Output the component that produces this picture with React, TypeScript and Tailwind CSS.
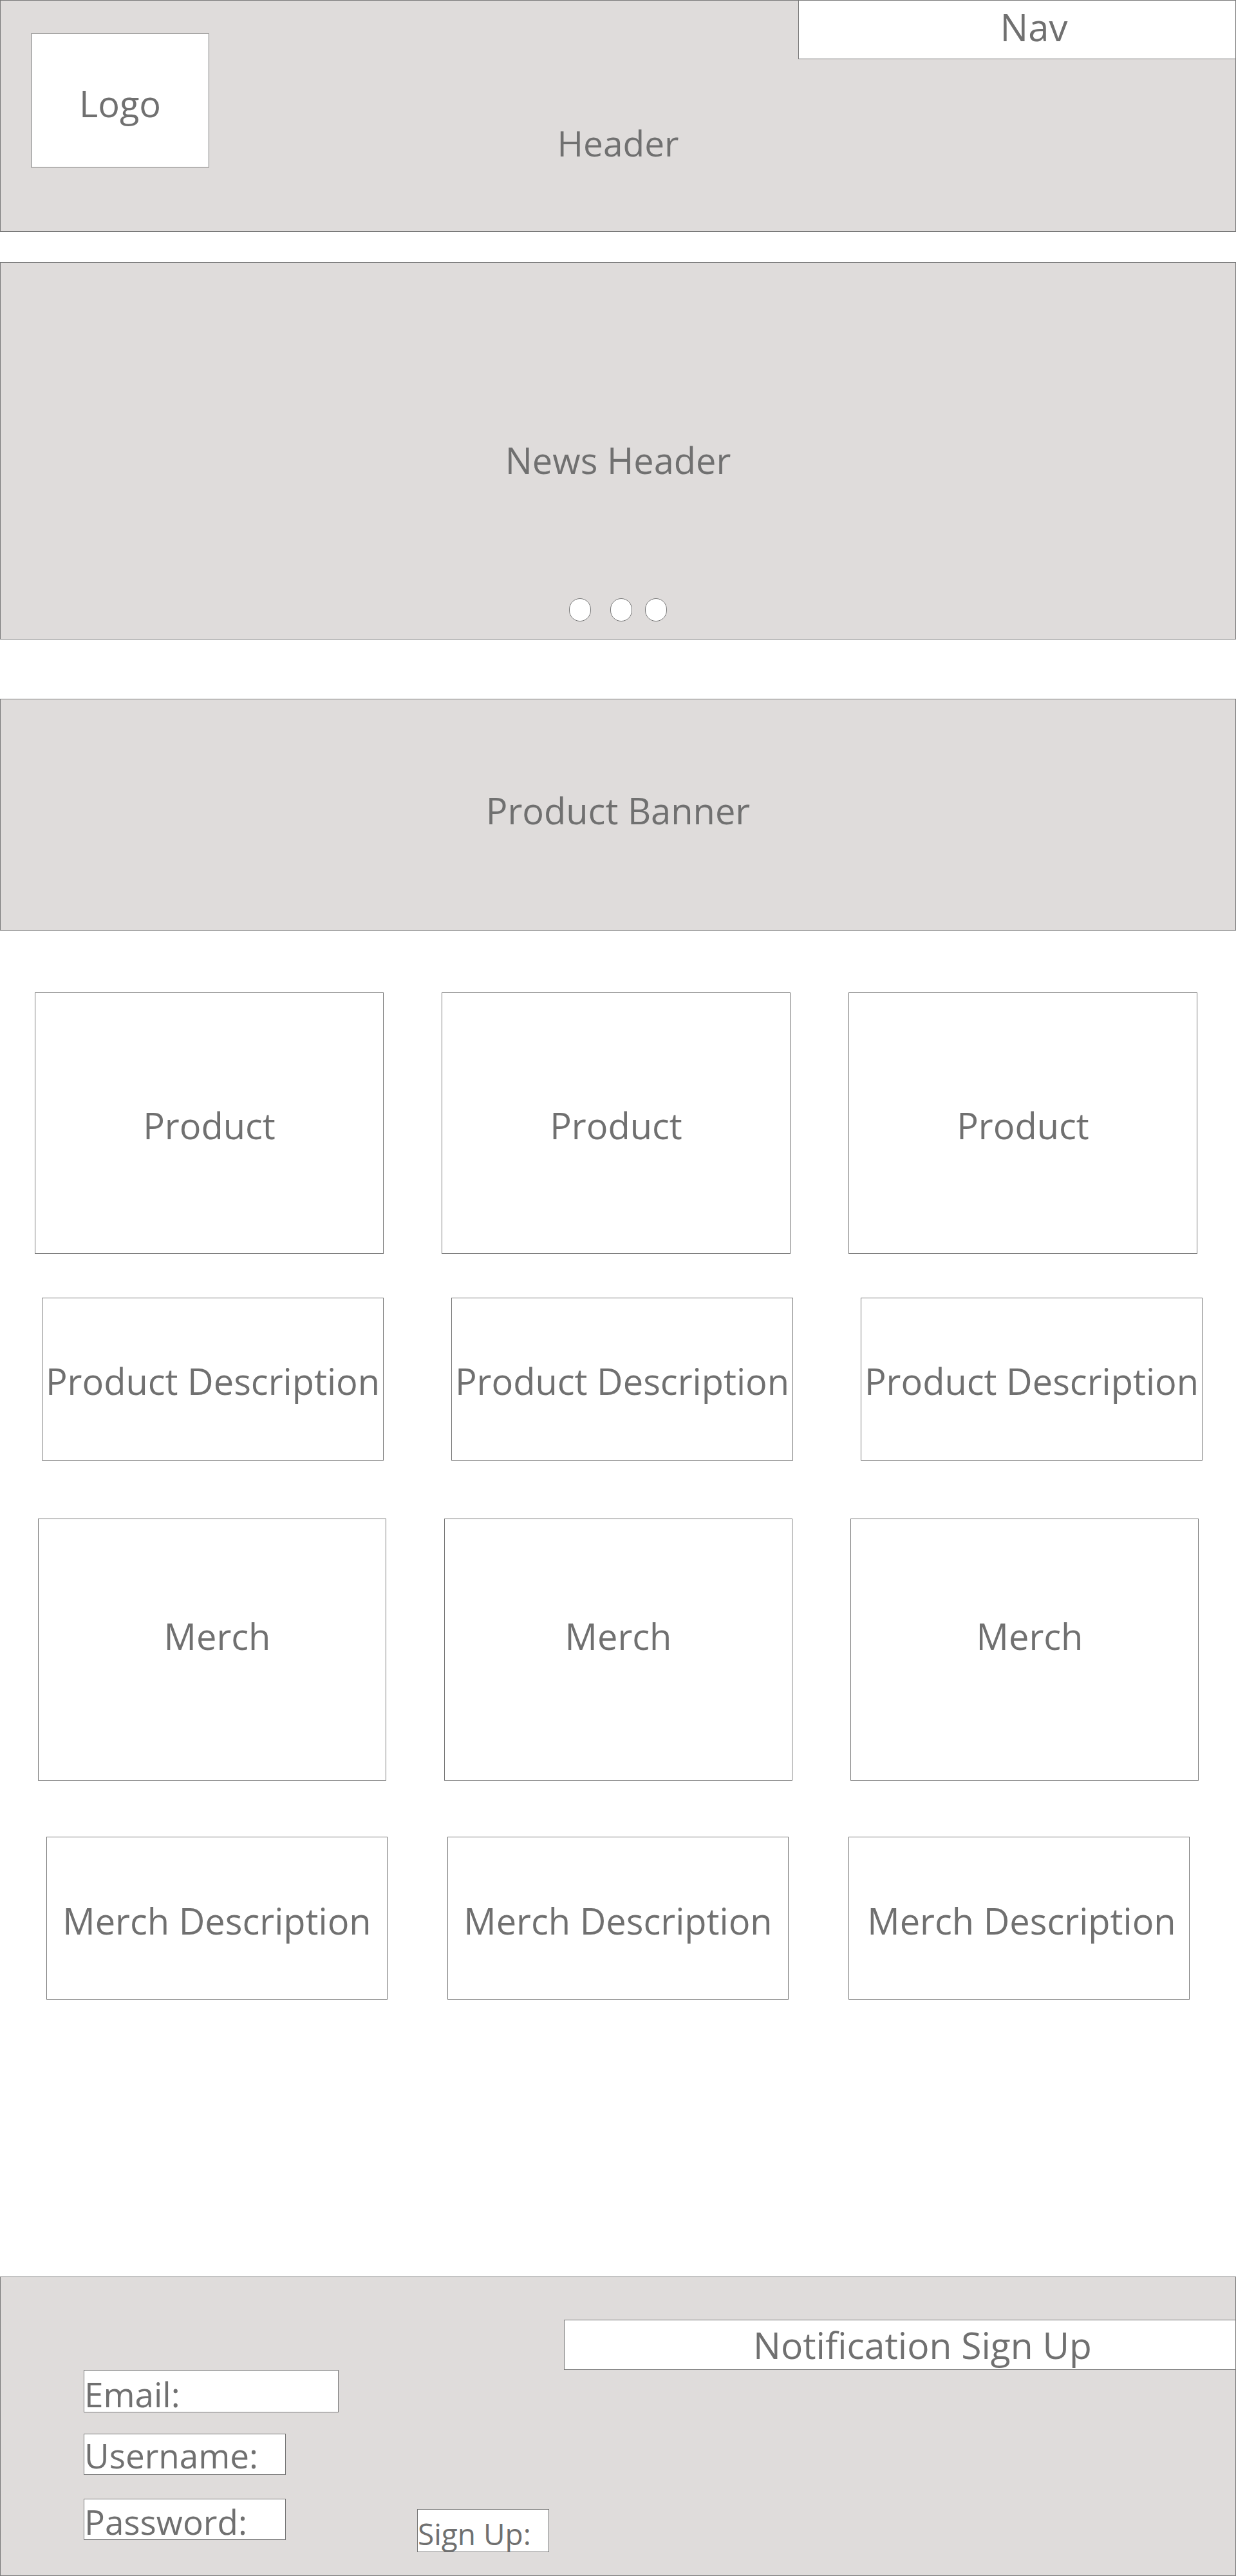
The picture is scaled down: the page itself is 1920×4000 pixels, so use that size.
const line = "border border-[#777]";

type BoxProps = {
    label: string;
    className?: string;
};

function Box({ label, className = "" }: BoxProps) {
    return (
        <div className={`flex items-center justify-center whitespace-nowrap border border-[#777] bg-white text-[56px] leading-none ${className}`}>
            {label}
        </div>
    );
}

function Row({ items, className, boxClass, extra = [] }: { items: string[]; className: string; boxClass: string; extra?: string[] }) {
    return (
        <div className={`flex ${className}`}>
            {items.map((label, i) => (
                <Box key={i} label={label} className={`${boxClass} ${extra[i] ?? ""}`} />
            ))}
        </div>
    );
}

export default function App() {
    return (
        <div className="w-[1920px] bg-white text-[#707070]" style={{ fontFamily: '"Open Sans", "Noto Sans", sans-serif' }}>
            {/* header */}
            <header className={`grid h-[360px] grid-cols-[1fr_auto_1fr] bg-[#dfdcdb] ${line}`}>
                <div>
                    <div className={`ml-[47px] mt-[51px] flex h-[208px] w-[277px] items-center justify-center bg-white pt-[7px] text-[56px] leading-none ${line}`}>
                        Logo
                    </div>
                </div>
                <div className="mt-[193px] text-[55px] leading-none">Header</div>
                <div className="flex justify-end">
                    <div className="flex h-[91px] w-[679px] justify-center border-b border-l border-[#777] bg-white pl-[52px] pt-[12px] text-[58px] leading-none">
                        Nav
                    </div>
                </div>
            </header>

            {/* news */}
            <section className={`mt-[47px] flex h-[586px] flex-col items-center bg-[#dfdcdb] pt-[278px] ${line}`}>
                <div className="text-[56px] leading-none">News Header</div>
                <div className="mt-[187px] flex">
                    <span className={`mr-[30px] h-[36px] w-[34px] rounded-full bg-white ${line}`} />
                    <span className={`mr-[20px] h-[36px] w-[34px] rounded-full bg-white ${line}`} />
                    <span className={`h-[36px] w-[34px] rounded-full bg-white ${line}`} />
                </div>
            </section>

            {/* banner */}
            <section className={`mt-[92px] flex h-[360px] items-center justify-center bg-[#dfdcdb] pb-[14px] text-[56px] leading-none ${line}`}>
                Product Banner
            </section>

            <Row
                items={["Product", "Product", "Product"]}
                className="ml-[54px] mt-[96px] gap-[90px]"
                boxClass="h-[406px] w-[542px] pt-[6px]"
            />
            <Row
                items={["Product Description", "Product Description", "Product Description"]}
                className="ml-[65px] mt-[68px] gap-[105px]"
                boxClass="h-[253px] w-[531px] pt-[4px]"
            />
            <Row
                items={["Merch", "Merch", "Merch"]}
                className="ml-[59px] mt-[90px] gap-[90px]"
                boxClass="h-[407px] w-[541px] pb-[43px]"
                extra={["pl-[16px]", "", "pl-[16px]"]}
            />
            <Row
                items={["Merch Description", "Merch Description", "Merch Description"]}
                className="ml-[72px] mt-[87px] gap-[93px]"
                boxClass="h-[253px] w-[530px] pt-[7px]"
                extra={["", "", "pl-[8px]"]}
            />

            {/* footer */}
            <footer className={`mt-[430px] flex h-[465px] flex-col bg-[#dfdcdb] ${line}`}>
                <div className="mt-[66px] flex h-[78px] w-[1043px] justify-center self-end border-y border-l border-[#777] bg-white pl-[70px] pt-[10px] text-[57px] leading-none">
                    Notification Sign Up
                </div>
                <div className={`ml-[129px] h-[66px] w-[396px] bg-white pt-[10px] text-[53px] leading-none ${line}`}>Email:</div>
                <div className={`ml-[129px] mt-[33px] h-[64px] w-[314px] bg-white pt-[6px] text-[53px] leading-none ${line}`}>Username:</div>
                <div className="ml-[129px] mt-[37px] flex items-start">
                    <div className={`h-[64px] w-[314px] bg-white pt-[8px] text-[53px] leading-none ${line}`}>Password:</div>
                    <button type="button" className={`ml-[204px] mt-[16px] h-[67px] w-[205px] bg-white pt-[8px] text-left text-[46px] leading-none ${line}`}>
                        Sign Up:
                    </button>
                </div>
            </footer>
        </div>
    );
}
